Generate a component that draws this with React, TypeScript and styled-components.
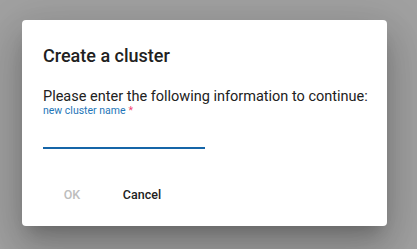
import styled, { createGlobalStyle } from "styled-components";

const GlobalStyle = createGlobalStyle`
  html, body {
    margin: 0;
    padding: 0;
    background: #a1a1a1;
  }
  body {
    font-family: Roboto, "Liberation Sans", sans-serif;
  }
`;

const Backdrop = styled.div`
  width: 417px;
  height: 249px;
  box-sizing: border-box;
  padding: 20px 30px 23px 22px;
  background: #a1a1a1;
`;

const Dialog = styled.div`
  width: 365px;
  height: 206px;
  box-sizing: border-box;
  background: #fff;
  border-radius: 4px;
  box-shadow: 0 11px 15px -7px rgba(0, 0, 0, 0.2),
    0 24px 38px 3px rgba(0, 0, 0, 0.14), 0 9px 46px 8px rgba(0, 0, 0, 0.12);
  display: flex;
  flex-direction: column;
`;

const Title = styled.h2`
  margin: 0;
  padding: 20px 21px 0;
  font-size: 18px;
  font-weight: 500;
  line-height: 32px;
  color: #212121;
`;

const Content = styled.div`
  padding: 18px 21px 0;
`;

const Message = styled.p`
  margin: 0;
  font-size: 14.5px;
  line-height: 14px;
  white-space: nowrap;
  color: #212121;
`;

const Field = styled.div`
  display: flex;
  flex-direction: column;
  width: 162px;
`;

const Label = styled.label`
  font-size: 10.5px;
  line-height: 10px;
  margin-top: 2px;
  color: #1f76b8;
`;

const Required = styled.span`
  color: #f44372;
  margin-left: 3px;
`;

const Input = styled.input`
  border: none;
  border-bottom: 2px solid #1565a8;
  outline: none;
  padding: 0;
  height: 29px;
  margin-top: 2px;
  font: inherit;
  font-size: 16px;
  background: transparent;
`;

const Actions = styled.div`
  display: flex;
  gap: 6px;
  padding: 27px 0 0 18px;
`;

const Button = styled.button<{ $disabled?: boolean }>`
  min-width: 64px;
  height: 36px;
  padding: 6px 8px;
  border: none;
  background: transparent;
  font-family: Roboto, "Liberation Sans", sans-serif;
  font-size: 12.5px;
  font-weight: 500;
  color: ${(p) => (p.$disabled ? "#bdbdbd" : "#212121")};
`;

export default function App() {
  return (
    <>
      <GlobalStyle />
      <Backdrop>
        <Dialog>
          <Title>Create a cluster</Title>
          <Content>
            <Message>Please enter the following information to continue:</Message>
            <Field>
              <Label htmlFor="cluster">
                new cluster name<Required>*</Required>
              </Label>
              <Input id="cluster" />
            </Field>
          </Content>
          <Actions>
            <Button $disabled>OK</Button>
            <Button>Cancel</Button>
          </Actions>
        </Dialog>
      </Backdrop>
    </>
  );
}
